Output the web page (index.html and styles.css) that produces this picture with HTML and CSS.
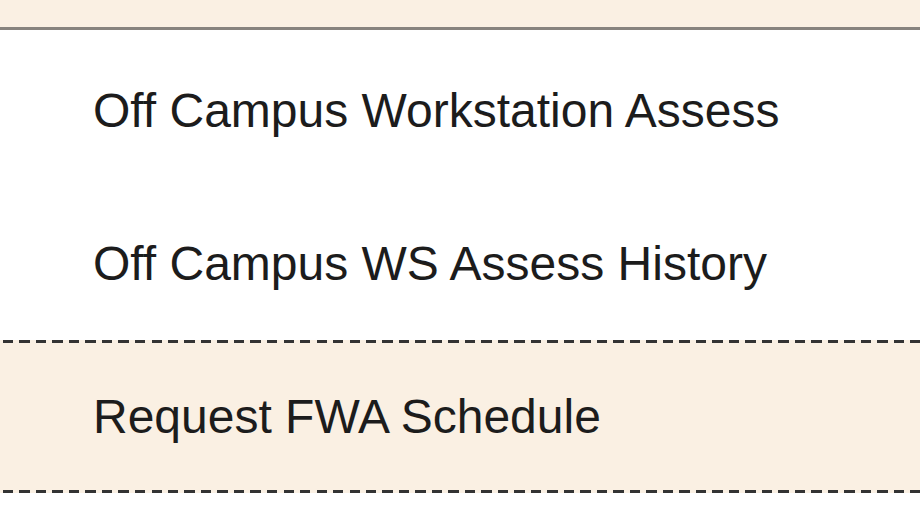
FILE: index.html
```html
<!DOCTYPE html>
<html lang="en">

<head>
  <meta charset="UTF-8">
  <meta name="viewport" content="width=device-width, initial-scale=1.0">
  <title>Menu</title>
  <link rel="stylesheet" href="styles.css">
</head>

<body>
  <div class="menu-top"></div>
  <ul class="menu">
    <li class="menu-item">Off Campus Workstation Assess</li>
    <li class="menu-item">Off Campus WS Assess History</li>
    <li class="menu-item selected">Request FWA Schedule</li>
  </ul>
</body>

</html>
```

FILE: styles.css
```css
* {
  box-sizing: border-box;
}
body {
  font-family: 'Liberation Sans', Arial, sans-serif;
  background-color: #ffffff;
  margin: 0;
  padding: 0;
}
.menu-top {
  height: 30px;
  background-color: #faf0e3;
  border-bottom: 3px solid #87837e;
}
.menu {
  list-style: none;
  margin: 0;
  padding: 4px 0 0;
}
.menu-item {
  height: 153px;
  display: flex;
  align-items: center;
  padding-left: 93px;
  font-size: 48px;
  font-variant-ligatures: none;
  color: #1c1c1c;
}
.selected {
  background:
    repeating-linear-gradient(to right, transparent 0 3px, #333333 3px 13.5px, transparent 13.5px 16.5px) top / 100% 3px no-repeat,
    repeating-linear-gradient(to right, transparent 0 3px, #333333 3px 13.5px, transparent 13.5px 16.5px) bottom / 100% 3px no-repeat,
    #faf0e3;
}
```
